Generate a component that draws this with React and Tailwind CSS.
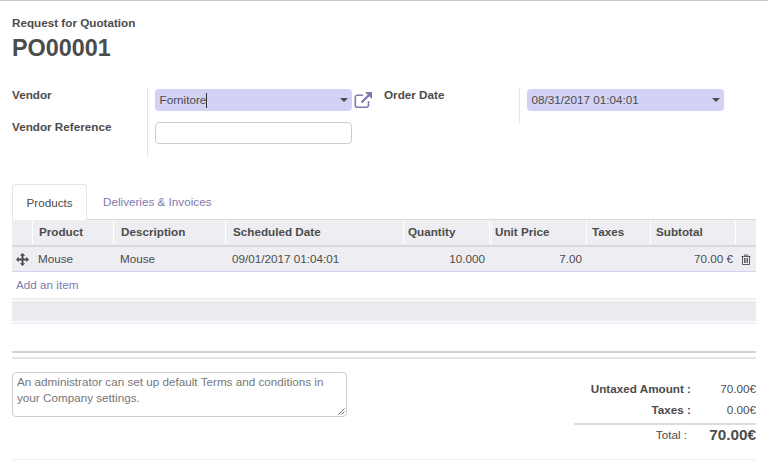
import React from "react";

function MoveIcon() {
  return (
    <svg width="13" height="13" viewBox="0 0 24 24" fill="#4c4c4c">
      <path d="M12 0l5 5h-3.2v5.2H19V7l5 5-5 5v-3.2h-5.2V19H17l-5 5-5-5h3.2v-5.2H5V17l-5-5 5-5v3.2h5.2V5H7z" />
    </svg>
  );
}

function ExternalIcon() {
  return (
    <svg width="19" height="18" viewBox="0 0 19 18" fill="none" stroke="#7c7bad" strokeWidth="1.6">
      <path d="M14.5 10v4.2a2 2 0 0 1-2 2H3.3a2 2 0 0 1-2-2V6.2a2 2 0 0 1 2-2H9" />
      <path d="M7.5 11.5L16 3" strokeWidth="2.4" />
      <path d="M11 1h7v7z" fill="#7c7bad" stroke="none" />
    </svg>
  );
}

function TrashIcon() {
  return (
    <svg width="10" height="11" viewBox="0 0 10 11" fill="none" stroke="#5a5a5a" strokeWidth="1">
      <path d="M0.5 2.5h9M3.3 2.5V1h3.4v1.5M1.5 2.5v8h7v-8M3.5 4v5M5 4v5M6.5 4v5" />
    </svg>
  );
}

function Caret() {
  return <span className="w-0 h-0 border-x-[4px] border-x-transparent border-t-[4px] border-t-[#4c4c4c]" />;
}

function SelectBox({ children }) {
  return (
    <div className="w-[197px] h-[22px] rounded-[4px] bg-[#d2d2f5] pl-[4.5px] pr-[4px] flex items-center justify-between text-[#4c4c4c]">
      <span className="flex items-center">{children}</span>
      <Caret />
    </div>
  );
}

const columns = "grid grid-cols-[21px_81px_112px_178px_86px_97px_64px_85px_20px]";

function HeadCell({ children, className = "" }) {
  return (
    <div className={`border-white my-[1px] pb-[2px] flex items-center font-bold text-[#4c4c4c] ${className}`}>
      {children}
    </div>
  );
}

export default function App() {
  return (
    <div className="w-[768px] h-[474px] overflow-hidden bg-white border-t border-[#c9c9c9] font-['Liberation_Sans',Arial,sans-serif] text-[11.7px] leading-[18px] text-[#4c4c4c]">
      <div className="px-[12px]">
        <div className="pt-[13px] font-bold">Request for Quotation</div>
        <h1 className="font-bold text-[23.4px] leading-[32px]">PO00001</h1>

        <div className="mt-[21px] flex">
          <div className="w-[135px] font-bold">
            <div className="h-[32px] pt-[1px]">Vendor</div>
            <div className="pt-[1px]">Vendor Reference</div>
          </div>
          <div className="w-[237px] mt-[2px] h-[70px] border-l border-[#e6e6e6] pl-[7px] pt-[2px]">
            <div className="flex items-center gap-[2px]">
              <SelectBox>
                Fornitore
                <span className="w-px h-[15px] bg-[#333]" />
              </SelectBox>
              <ExternalIcon />
            </div>
            <div className="mt-[11px] w-[197px] h-[22px] rounded-[4px] border border-[#ccc] bg-white" />
          </div>
          <div className="w-[135px] font-bold pt-[1px]">Order Date</div>
          <div className="mt-[2px] h-[36px] border-l border-[#e6e6e6] pl-[7px] pt-[2px]">
            <SelectBox>08/31/2017 01:04:01</SelectBox>
          </div>
        </div>

        <div className="mt-[27px] flex h-[35px]">
          <div className="w-[75px] -mb-px border border-b-0 border-[#e6e6e6] rounded-t-[4px] bg-white flex items-center justify-center z-10">Products</div>
          <div className="pl-[16px] flex items-center text-[#7c7bad]">Deliveries &amp; Invoices</div>
        </div>

        <div className={`${columns} h-[28px] w-[744px] bg-[#eeeef2] border-t border-[#d9d9d9] border-b-2 border-b-[#d9d9d9]`}>
          <HeadCell className="border-r" />
          <HeadCell className="border-r pl-[6px]">Product</HeadCell>
          <HeadCell className="border-r pl-[7px]">Description</HeadCell>
          <HeadCell className="border-r pl-[7px]">Scheduled Date</HeadCell>
          <HeadCell className="border-r pl-[4px]">Quantity</HeadCell>
          <HeadCell className="border-r border-l ml-[1px] pl-[3px]">Unit Price</HeadCell>
          <HeadCell className="border-r pl-[5px]">Taxes</HeadCell>
          <HeadCell className="border-r pl-[5px]">Subtotal</HeadCell>
          <div />
        </div>
        <div className={`${columns} h-[25px] w-[744px] bg-[#eeeef2] border-b border-[#d2d2f0] items-center`}>
          <div className="flex justify-center"><MoveIcon /></div>
          <div className="pl-[5px]">Mouse</div>
          <div className="pl-[6px]">Mouse</div>
          <div className="pl-[6px]">09/01/2017 01:04:01</div>
          <div className="text-right pr-[5px]">10.000</div>
          <div className="text-right pr-[5px]">7.00</div>
          <div />
          <div className="text-right pr-[3px]">70.00 €</div>
          <div className="flex justify-center"><TrashIcon /></div>
        </div>
        <div className="h-[26px] pl-[4px] flex items-center text-[#7c7bad]">Add an item</div>
        <div className="h-[26px] w-[744px] border-t-2 border-t-[#eeeef1] border-b-2 border-b-[#f0f0f8] bg-[#ebebf0] shadow-[inset_0_1px_0_#fff,inset_0_-1px_0_#fff]" />

        <div className="mt-[27px] w-[744px] h-[8px] border-t-2 border-b-2 border-t-[#d2d2d6] border-b-[#e4e4e8]" />

        <div className="mt-[13px] w-[744px] flex justify-between">
          <div className="relative w-[335px] h-[45px] rounded-[4px] border border-[#ccc] px-[4px] pt-[1px] text-[#777] leading-[16px]">
            An administrator can set up default Terms and conditions in your Company settings.
            <svg className="absolute right-[1px] bottom-[1px]" width="7" height="7" viewBox="0 0 7 7" stroke="#666" strokeWidth="1">
              <path d="M0.5 6.5L6.5 0.5M3.5 6.5L6.5 3.5" />
            </svg>
          </div>
          <div className="w-[182px] pt-[7px]">
            <div className="flex justify-end h-[20px] items-center">
              <span className="font-bold">Untaxed Amount :</span>
              <span className="w-[65px] text-right">70.00€</span>
            </div>
            <div className="flex justify-end h-[20px] items-center mt-[1px]">
              <span className="font-bold">Taxes :</span>
              <span className="w-[65px] text-right">0.00€</span>
            </div>
            <div className="mt-[3px] border-t-2 border-[#dcdcdc] h-[22px] flex justify-end items-center">
              <span>Total :</span>
              <span className="w-[69px] text-right font-bold text-[15.3px]">70.00€</span>
            </div>
          </div>
        </div>

        <div className="mt-[14px] w-[744px] border-t border-[#eeeeee]" />
      </div>
    </div>
  );
}
